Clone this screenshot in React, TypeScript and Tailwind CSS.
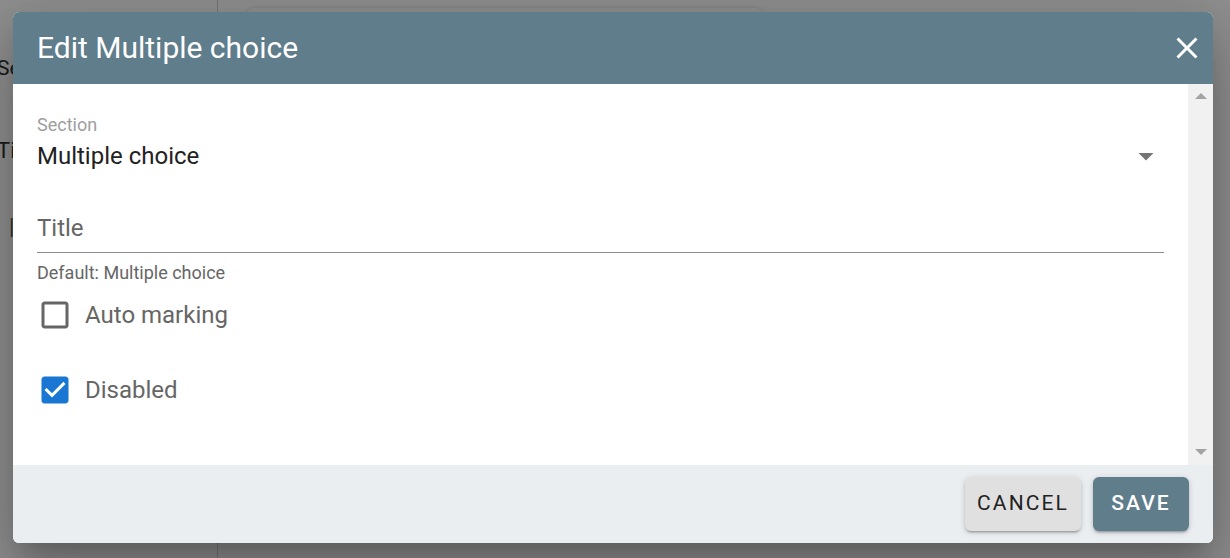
import React from "react";

function CloseIcon() {
  return (
    <svg width="36" height="36" viewBox="0 0 24 24" fill="#ffffff">
      <path d="M19 6.41 17.59 5 12 10.59 6.41 5 5 6.41 10.59 12 5 17.59 6.41 19 12 13.41 17.59 19 19 17.59 13.41 12z" />
    </svg>
  );
}

function ArrowDrop() {
  return (
    <svg width="36" height="36" viewBox="0 0 24 24" fill="#757575">
      <path d="M7 10l5 5 5-5z" />
    </svg>
  );
}

function BoxBlank() {
  return (
    <svg width="36" height="36" viewBox="0 0 24 24" fill="#666666">
      <path d="M19 5v14H5V5h14m0-2H5c-1.1 0-2 .9-2 2v14c0 1.1.9 2 2 2h14c1.1 0 2-.9 2-2V5c0-1.1-.9-2-2-2z" />
    </svg>
  );
}

function BoxChecked() {
  return (
    <svg width="36" height="36" viewBox="0 0 24 24" fill="#1976d2">
      <path d="M19 3H5c-1.11 0-2 .9-2 2v14c0 1.1.89 2 2 2h14c1.11 0 2-.9 2-2V5c0-1.1-.89-2-2-2zm-9 14l-5-5 1.41-1.41L10 14.17l7.59-7.59L19 8l-9 9z" />
    </svg>
  );
}

export default function App() {
  return (
    <div className="relative w-[1230px] h-[558px] overflow-hidden bg-white font-['Roboto',sans-serif]">
      {/* page behind */}
      <div className="flex h-full">
        <div className="w-[218px] h-full border-r border-[#d0d0d0] flex flex-col">
          <div className="mt-[58px] -ml-[3px] text-[21px] leading-none text-[#333]">Settings</div>
          <div className="mt-[61px] -ml-[3px] text-[22px] leading-none text-[#333]">Time</div>
          <div className="mt-[54px] ml-[9px] text-[22px] leading-none text-[#555]">|</div>
        </div>
        <div className="pl-[29px] pt-[8px]">
          <div className="w-[515px] h-[300px] rounded-[6px] bg-white shadow-[0_1px_4px_rgba(0,0,0,0.25)]" />
        </div>
      </div>

      {/* backdrop */}
      <div className="absolute inset-0 bg-black/[0.44]" />

      {/* dialog */}
      <div className="absolute left-[13px] top-[12px] w-[1200px] h-[531px] flex flex-col rounded-[6px] overflow-hidden bg-white shadow-[0_16px_22px_-10px_rgba(0,0,0,0.2),0_36px_57px_5px_rgba(0,0,0,0.14),0_13px_69px_12px_rgba(0,0,0,0.12)]">
        <div className="h-[72px] shrink-0 bg-[#607d8b] flex items-center justify-between pl-[24px] pr-[8px]">
          <div className="text-[30px] leading-none font-normal text-white">Edit Multiple choice</div>
          <CloseIcon />
        </div>

        <div className="flex flex-1 min-h-0">
          <div className="flex-1 px-[24px] flex flex-col">
            <div className="mt-[32px] text-[18px] leading-none text-[#9e9e9e]">Section</div>
            <div className="mt-[10px] h-[24px] flex items-center justify-between">
              <div className="text-[24px] leading-none text-[#222]">Multiple choice</div>
              <ArrowDrop />
            </div>
            <div className="mt-[48px] text-[24px] leading-none text-[#666]">Title</div>
            <div className="mt-[12px] h-px bg-[#8c8c8c]" />
            <div className="mt-[11px] text-[18px] leading-none text-[#666]">Default: Multiple choice</div>
            <div className="mt-[15px] h-[36px] flex items-center">
              <BoxBlank />
              <span className="ml-[12px] text-[24px] leading-none text-[#666]">Auto marking</span>
            </div>
            <div className="mt-[39px] h-[36px] flex items-center">
              <BoxChecked />
              <span className="ml-[12px] text-[24px] leading-none text-[#666]">Disabled</span>
            </div>
          </div>
          <div className="w-[25px] bg-[#f1f1f1] flex flex-col items-center justify-between pt-[9px] pb-[10px]">
            <div className="w-0 h-0 border-l-[6px] border-r-[6px] border-b-[6px] border-l-transparent border-r-transparent border-b-[#a3a3a3]" />
            <div className="w-0 h-0 border-l-[6px] border-r-[6px] border-t-[6px] border-l-transparent border-r-transparent border-t-[#a3a3a3]" />
          </div>
        </div>

        <div className="h-[78px] shrink-0 bg-[#eaeef1] flex items-center justify-end gap-[12px] pr-[24px]">
          <button className="w-[116px] h-[54px] rounded-[6px] bg-[#e0e0e0] text-[#222] text-[21px] font-normal tracking-[0.1em] shadow-[0_3px_2px_-2px_rgba(0,0,0,0.2),0_2px_3px_0_rgba(0,0,0,0.14),0_1px_7px_0_rgba(0,0,0,0.12)]">
            CANCEL
          </button>
          <button className="w-[96px] h-[54px] rounded-[6px] bg-[#607d8b] text-white text-[21px] font-medium tracking-[0.1em] shadow-[0_3px_2px_-2px_rgba(0,0,0,0.2),0_2px_3px_0_rgba(0,0,0,0.14),0_1px_7px_0_rgba(0,0,0,0.12)]">
            SAVE
          </button>
        </div>
      </div>
    </div>
  );
}
